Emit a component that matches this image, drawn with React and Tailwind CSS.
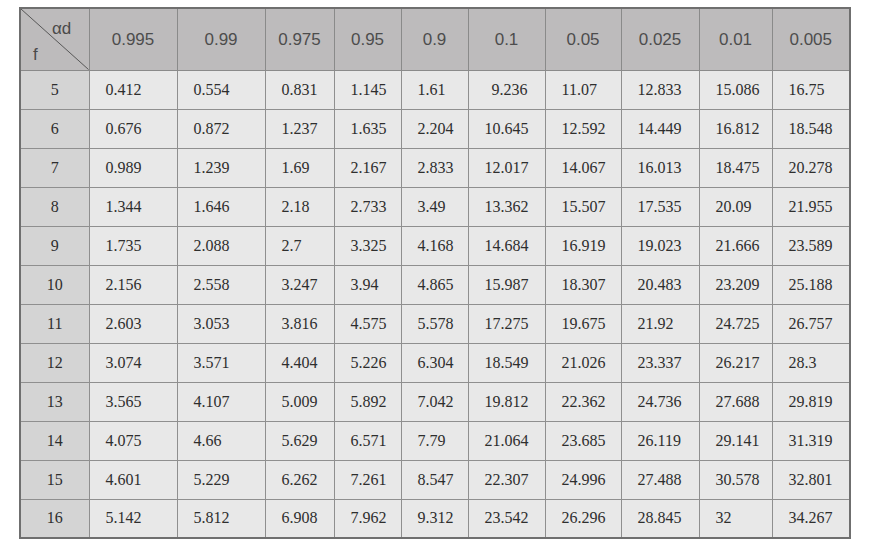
import React from 'react'

const HEADERS = ['0.995', '0.99', '0.975', '0.95', '0.9', '0.1', '0.05', '0.025', '0.01', '0.005']
const WIDTHS = [69, 88, 88, 69, 67, 67, 77, 76, 78, 73, 78]

const ROWS = [
  [5, '0.412', '0.554', '0.831', '1.145', '1.61', '9.236', '11.07', '12.833', '15.086', '16.75'],
  [6, '0.676', '0.872', '1.237', '1.635', '2.204', '10.645', '12.592', '14.449', '16.812', '18.548'],
  [7, '0.989', '1.239', '1.69', '2.167', '2.833', '12.017', '14.067', '16.013', '18.475', '20.278'],
  [8, '1.344', '1.646', '2.18', '2.733', '3.49', '13.362', '15.507', '17.535', '20.09', '21.955'],
  [9, '1.735', '2.088', '2.7', '3.325', '4.168', '14.684', '16.919', '19.023', '21.666', '23.589'],
  [10, '2.156', '2.558', '3.247', '3.94', '4.865', '15.987', '18.307', '20.483', '23.209', '25.188'],
  [11, '2.603', '3.053', '3.816', '4.575', '5.578', '17.275', '19.675', '21.92', '24.725', '26.757'],
  [12, '3.074', '3.571', '4.404', '5.226', '6.304', '18.549', '21.026', '23.337', '26.217', '28.3'],
  [13, '3.565', '4.107', '5.009', '5.892', '7.042', '19.812', '22.362', '24.736', '27.688', '29.819'],
  [14, '4.075', '4.66', '5.629', '6.571', '7.79', '21.064', '23.685', '26.119', '29.141', '31.319'],
  [15, '4.601', '5.229', '6.262', '7.261', '8.547', '22.307', '24.996', '27.488', '30.578', '32.801'],
  [16, '5.142', '5.812', '6.908', '7.962', '9.312', '23.542', '26.296', '28.845', '32', '34.267'],
]

export default function App() {
  return (
    <div className="w-[870px] h-[552px] bg-white pt-[7px] pl-[19px]">
      <table className="table-fixed border-collapse border-2 border-[#6f6f6f] w-[830px]">
        <colgroup>
          {WIDTHS.map((w, i) => (
            <col key={i} style={{ width: w }} />
          ))}
        </colgroup>
        <thead>
          <tr className="h-[62px] bg-[#bdbbbc]">
            <th className="relative border border-[#8a8a8a] p-0 font-normal">
              <svg className="absolute inset-0 w-full h-full" viewBox="0 0 69 62" preserveAspectRatio="none">
                <line x1="0" y1="0" x2="69" y2="62" stroke="#555" strokeWidth="1" />
              </svg>
              <span className="absolute left-[31px] top-[7px] text-[17px] text-[#4a4a4a] font-['Liberation_Sans',Arial,sans-serif]">αd</span>
              <span className="absolute left-[12px] top-[33px] text-[17px] text-[#4a4a4a] font-['Liberation_Sans',Arial,sans-serif]">f</span>
            </th>
            {HEADERS.map((h) => (
              <th
                key={h}
                className="border border-[#8a8a8a] font-normal text-center text-[17px] text-[#4d4d4d] font-['Liberation_Sans',Arial,sans-serif]"
              >
                {h}
              </th>
            ))}
          </tr>
        </thead>
        <tbody className="font-['Liberation_Serif','Times_New_Roman',serif] text-[16px] text-[#2e2e2e]">
          {ROWS.map(([f, ...vals]) => (
            <tr key={f} className="h-[39px]">
              <td className="border border-[#8f8f8f] bg-[#d4d4d4] text-center">{f}</td>
              {vals.map((v, i) => (
                <td
                  key={i}
                  className={
                    'border border-[#8f8f8f] bg-[#e8e8e8] ' + (v === '9.236' ? 'pl-[23px]' : 'pl-[16px]')
                  }
                >
                  {v}
                </td>
              ))}
            </tr>
          ))}
        </tbody>
      </table>
    </div>
  )
}
